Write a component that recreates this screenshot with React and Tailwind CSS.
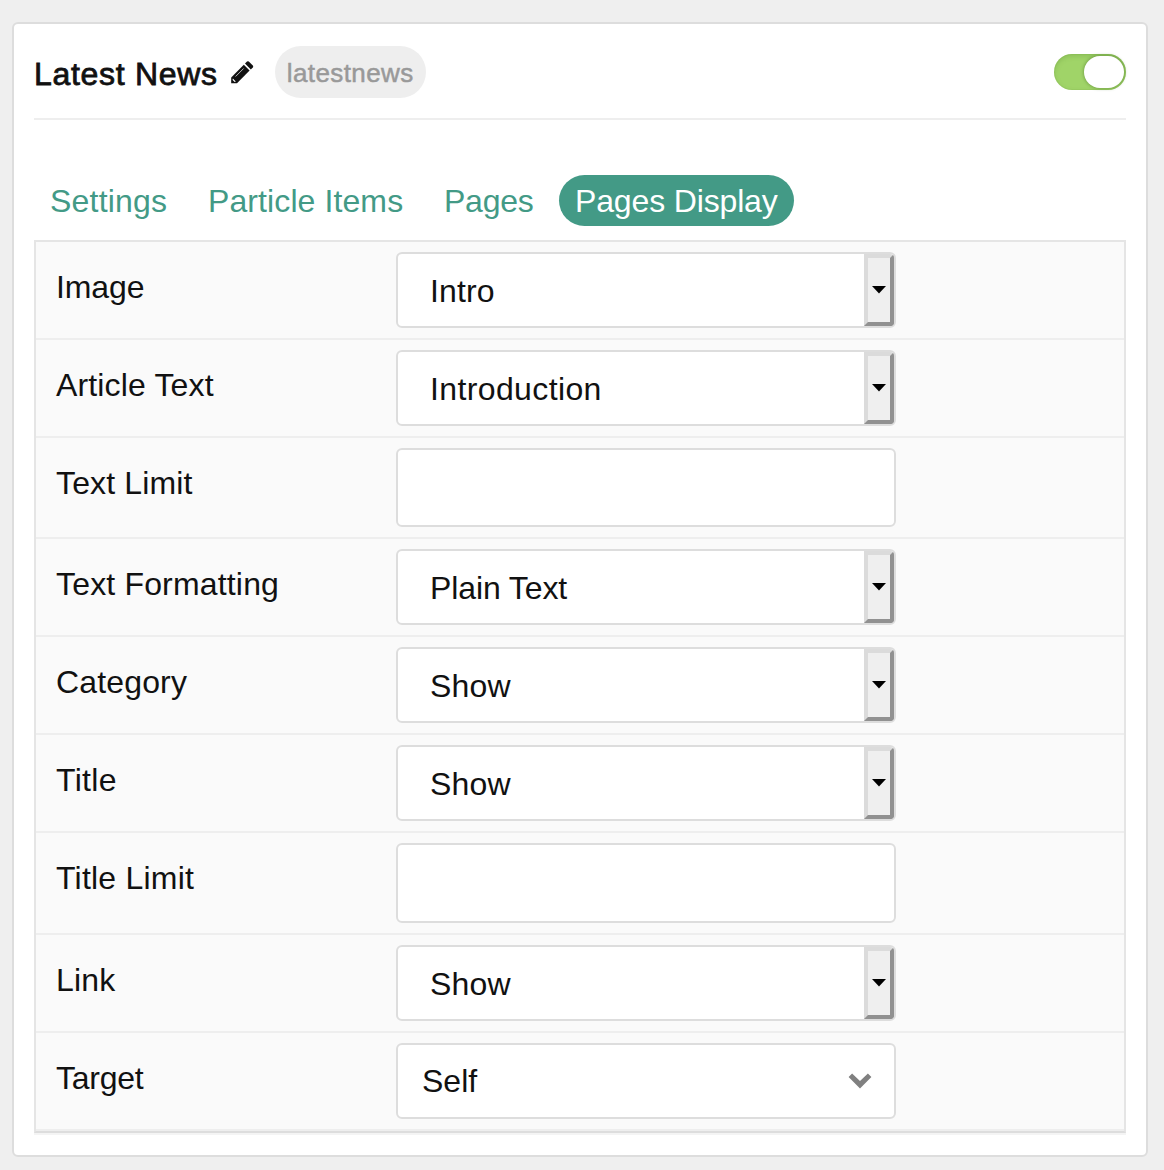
import React from 'react';

const rows = [
  { label: 'Image', track: 'tracking-[-0.1px]', value: 'Intro', vt: 'tracking-[0.1px]', kind: 'combo', h: 'h-[98px]' },
  { label: 'Article Text', track: 'tracking-[0.15px]', value: 'Introduction', vt: 'tracking-[0.38px]', kind: 'combo', h: 'h-[98px]' },
  { label: 'Text Limit', track: 'tracking-[0.15px]', kind: 'input', h: 'h-[101px]' },
  { label: 'Text Formatting', track: 'tracking-[0.17px]', value: 'Plain Text', vt: 'tracking-[-0.1px]', kind: 'combo', h: 'h-[98px]' },
  { label: 'Category', track: 'tracking-[0.15px]', value: 'Show', vt: 'tracking-[0.2px]', kind: 'combo', h: 'h-[98px]' },
  { label: 'Title', track: 'tracking-[0.3px]', value: 'Show', vt: 'tracking-[0.2px]', kind: 'combo', h: 'h-[98px]' },
  { label: 'Title Limit', track: 'tracking-[0.22px]', kind: 'input', h: 'h-[102px]' },
  { label: 'Link', track: 'tracking-[0.2px]', value: 'Show', vt: 'tracking-[0.2px]', kind: 'combo', h: 'h-[98px]' },
  { label: 'Target', track: 'tracking-[-0.25px]', value: 'Self', vt: 'tracking-[0px]', kind: 'select', h: 'h-[98px]' },
];

const fieldBox = 'flex h-full w-[500px] overflow-hidden rounded-[6px] border-2 border-[#ddd] bg-white';

function Field({ row }) {
  if (row.kind === 'input') {
    return <div className={fieldBox} />;
  }
  if (row.kind === 'select') {
    return (
      <div className={`${fieldBox} items-center justify-between pl-6 pr-[22.5px]`}>
        <span className={`leading-9 ${row.vt}`}>{row.value}</span>
        <svg className="h-[16px] w-[24px]" viewBox="0 0 24 16">
          <path d="M0.6 4 L4.1 0.5 L12 8 L19.9 0.5 L23.4 4 L12 15.4 Z" fill="#808080" />
        </svg>
      </div>
    );
  }
  return (
    <div className={fieldBox}>
      <span className={`grow pl-8 pt-[19px] leading-9 ${row.vt}`}>{row.value}</span>
      <span className="flex w-[30px] items-center justify-center border-4 border-t-[#dbdbdb] border-l-[#dbdbdb] border-r-[#919191] border-b-[#919191] bg-[#efefef]">
        <svg className="h-2 w-[14px] shrink-0" viewBox="0 0 14 8">
          <path d="M0 0 H14 L7 7.6 Z" fill="#000" />
        </svg>
      </span>
    </div>
  );
}

export default function App() {
  return (
    <div className="h-[1170px] w-[1164px] bg-[#efefef] pl-3 pt-[22px] font-['Liberation_Sans',Arial,sans-serif] text-[32px] whitespace-nowrap text-[#111]">
      <div className="h-[1135px] w-[1136px] rounded-[6px] border-2 border-[#ddd] bg-white px-5">
        <header className="flex h-24 items-center border-b-2 border-[#eee] pt-[2px]">
          <h4 className="mt-[3px] tracking-[0.7px] leading-9 [-webkit-text-stroke:0.8px_#111]">Latest News</h4>
          <svg className="ml-[13px] mt-px h-[23px] w-[23px]" viewBox="0 0 23 23">
            <path d="M0.2 16.4 L12.8 3.8 L18.6 9.6 L6 22.2 L0.2 22.2 Z" fill="#111" />
            <path d="M14 2.6 L16 0.6 Q16.9 -0.2 17.8 0.6 L21.8 4.6 Q22.6 5.5 21.8 6.4 L19.8 8.4 Z" fill="#111" />
            <path d="M1.9 17.6 L4.8 20.5 L3.6 20.9 L1.6 18.9 Z" fill="#fff" />
            <path d="M4.6 15.5 L12.6 7.5" stroke="#fff" strokeWidth="0.7" />
          </svg>
          <span className="ml-[21px] h-[52px] w-[151px] rounded-full bg-[#eee] pl-3 text-[26px] leading-[54px] tracking-[0.4px] text-[#999] [-webkit-text-stroke:0.5px_#999]">
            latestnews
          </span>
          <span className="ml-auto flex h-9 w-[72px] justify-end rounded-full bg-[#a0d468] p-[2px] shadow-[inset_0_0_0_1px_rgba(110,160,60,0.1),inset_0_2px_5px_rgba(90,140,50,0.3)]">
            <span className="h-8 w-10 rounded-full bg-white shadow-[0_0_3px_1px_rgba(70,110,40,0.4)]" />
          </span>
        </header>
        <nav className="mt-[55px] flex h-[51px] leading-[52px] text-[#439a86]">
          <span className="w-[158px] pl-4 tracking-[0.2px]">Settings</span>
          <span className="w-[236px] pl-4 tracking-[0.1px]">Particle Items</span>
          <span className="w-[131px] pl-4 tracking-[-0.25px]">Pages</span>
          <span className="w-[235px] rounded-full bg-[#439a86] pl-4 tracking-[-0.15px] text-white">Pages Display</span>
        </nav>
        <div className="mt-[14px] border-2 border-[#e5e5e5] border-b-[#ddd] bg-[#fafafa] shadow-[0_2px_0_#f4f4f4]">
          {rows.map((row) => (
            <div key={row.label} className={`flex border-b-2 border-[#eee] py-[10px] pl-5 ${row.h}`}>
              <div className={`w-[340px] pt-[17px] leading-9 ${row.track}`}>{row.label}</div>
              <Field row={row} />
            </div>
          ))}
        </div>
      </div>
    </div>
  );
}
